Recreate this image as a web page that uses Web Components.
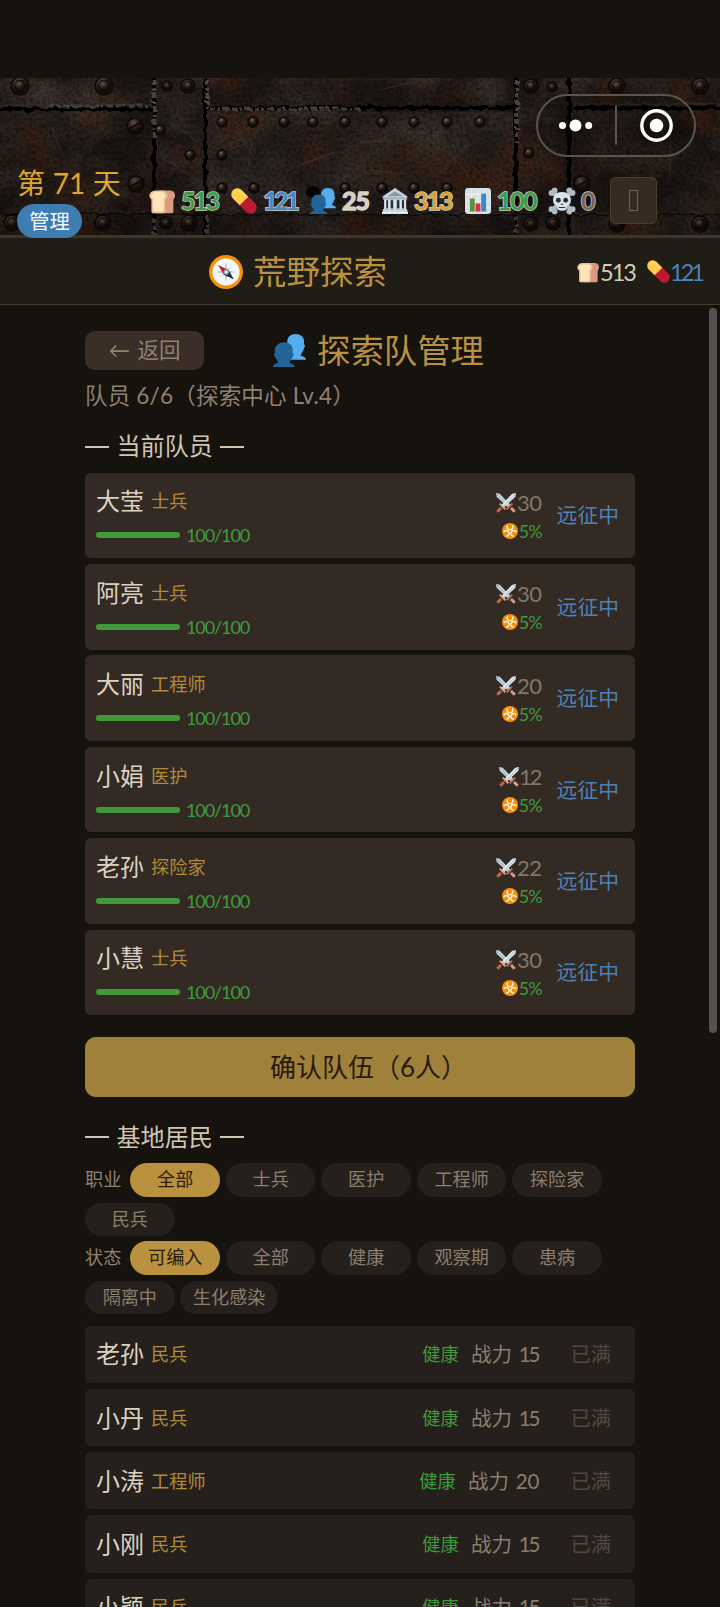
<!DOCTYPE html>
<html lang="zh-CN">
<head>
<meta charset="utf-8">
<title>荒野探索</title>
<style>
html,body{margin:0;background:#16120d}
body{width:720px;height:1607px;overflow:hidden;font-family:Lato,"Noto Sans CJK SC",sans-serif;font-weight:400;color:#d5c9b7}
</style>
</head>
<body>
<explore-app></explore-app>
<script>
const ICONS={
bread:'<path d="M12 3h14c6 0 8 7 4 11v15q0 2-2 2H8q-3 0-3-2z" fill="#d99a7f"/><path d="M8 3h8c7 0 9 8 4 11v15q0 2-2 2H5q-2 0-2-2V14C-2 10 1 3 8 3z" fill="#eec09a"/><path d="M8 5h7c5 0 7 6 3 8v14q0 2-2 2H7q-2 0-2-2V13C1 11 3 5 8 5z" fill="#ffe5ba"/>',
pill:'<g transform="rotate(45 16 16)"><rect x="-3" y="8.500" width="38" height="15" rx="7.500" fill="#be1933"/><path d="M16 8.500H4.500a7.500 7.500 0 0 0 0 15H16z" fill="#ffce4b"/><path d="M1 15q0-4 5-4h8" stroke="#ffe28d" stroke-width="1.500" fill="none" opacity=".7"/></g>',
people:'<path d="M22 0c6 0 9 4 8 10q2 1 0 4c-1 4-3 5-3 7q5 1 5 4H15v-5l-1-6q-2-2 0-4C13 4 16 0 22 0z" fill="#55acee"/><path d="M11 8c6 0 9 4 8 10q2 1 0 4c-1 3-3 4-3 6q5 1 5 4H0q0-3 5-4c0-2-2-3-3-6q-2-3 0-4C1 12 5 8 11 8z" fill="#226699"/>',
bank:'<path d="M16 1L31 11v3H1v-3zM3 14h26v12H3z" fill="#a9b8c4"/><path d="M16 0L32 11H0z" fill="#ccd6dd"/><path d="M16 4l10 6H6z" fill="#8899a6"/><path d="M6 15v10M12 15v10M20 15v10M26 15v10" stroke="#292f33" stroke-width="3"/><path d="M4 14v12M9 14v12M16 14v12M23 14v12M28.500 14v12" stroke="#e1e8ed" stroke-width="2.500"/><path d="M1 26h30v5H1z" fill="#ccd6dd"/><path d="M0 29h32v3H0z" fill="#e1e8ed"/>',
chart:'<rect width="32" height="32" rx="4" fill="#d7e0e6"/><path d="M1 8h30M1 16h30M1 24h30M8 1v30M16 1v30M24 1v30" stroke="#edf4f7"/><path d="M6 13h6v16H6z" fill="#5c913b"/><path d="M13 19h6v10h-6z" fill="#dd2e44"/><path d="M20 7h6v22h-6z" fill="#3b88c3"/>',
skull:'<path d="M4 5l24 22M28 5L4 27" stroke="#a7b9c6" stroke-width="5"/><g fill="#adbdca"><circle cx="3" cy="6" r="3.500"/><circle cx="7" cy="3" r="3.500"/><circle cx="25" cy="3" r="3.500"/><circle cx="29" cy="6" r="3.500"/><circle cx="3" cy="26" r="3.500"/><circle cx="7" cy="29" r="3.500"/><circle cx="25" cy="29" r="3.500"/><circle cx="29" cy="26" r="3.500"/></g><path d="M16 5c7 0 11 4 11 10 0 4-2 6-5 7v4q-6 4-12 0v-4c-3-1-5-3-5-7C5 9 9 5 16 5z" fill="#d9e3e9"/><circle cx="11.500" cy="15" r="3" fill="#292f33"/><circle cx="20.500" cy="15" r="3" fill="#292f33"/><path d="M14.500 20h3M12 24h8" stroke="#292f33" stroke-width="1.500"/>',
compass:'<circle cx="16" cy="16" r="16" fill="#f4900c"/><circle cx="16" cy="16" r="12.800" fill="#f5f8fa"/><path d="M16 6l1.500 8.500L26 16l-8.500 1.500L16 26l-1.500-8.500L6 16l8.500-1.500z" fill="#b6ccd8"/><path d="M10 10l5 4 7 8-8-5zM22 10l-4 5-8 7 5-8z" fill="#d0dde4"/><path d="M8.500 9.500l10 4.500-4.500 4.500z" fill="#be1931"/><path d="M23.500 23l-9.500-4.500 4.500-4.500z" fill="#292f33"/><circle cx="16.200" cy="16" r="2.500" fill="#9aabb7"/><circle cx="16.200" cy="16" r="1.100" fill="#fff"/>',
swords:'<path d="M0 0l6 1 18 19-4 4L1 6z" fill="#c3d4df"/><path d="M1 1l20 22" stroke="#8ba0b0" stroke-width="1.300"/><path d="M17 26l9-9" stroke="#bf6952" stroke-width="3"/><path d="M24 24l6 6" stroke="#d99e82" stroke-width="4.500"/><g transform="matrix(-1 0 0 1 32 0)"><path d="M0 0l6 1 18 19-4 4L1 6z" fill="#dce8ef"/><path d="M1 1l20 22" stroke="#9cb0bd" stroke-width="1.300"/><path d="M17 26l9-9" stroke="#e3a27c" stroke-width="3"/><path d="M24 24l6 6" stroke="#bf6952" stroke-width="4.500"/></g>',
bio:'<circle cx="16" cy="16" r="16" fill="#f4900c"/><g fill="none" stroke="#fff1dc" stroke-width="3"><path d="M11.500 5a5.500 5.500 0 1 0 9 0"/><path d="M11.500 5a5.500 5.500 0 1 0 9 0" transform="rotate(120 16 16.500)"/><path d="M11.500 5a5.500 5.500 0 1 0 9 0" transform="rotate(240 16 16.500)"/></g><circle cx="16" cy="16.500" r="2" fill="#f4900c"/>',
};
function define(name,html,after){
  const t=document.createElement('template');t.innerHTML=html;
  customElements.define(name,class extends HTMLElement{
    connectedCallback(){
      if(this.shadowRoot)return;
      this.attachShadow({mode:'open'}).append(t.content.cloneNode(true));
      if(after)after(this,this.shadowRoot);
    }
  });
}

define('ui-icon','<style>:host{display:block;flex:none}svg{display:block;overflow:visible}</style><svg viewBox="0 0 32 32"></svg>',(el,r)=>{
  const s=r.querySelector('svg'),n=el.getAttribute('size')||26;
  s.setAttribute('width',n);s.setAttribute('height',n);s.innerHTML=ICONS[el.getAttribute('name')];
});

/* Riveted rusty plates behind the status bar */
define('metal-plates',`<style>:host{display:block}svg{display:block}</style>
<svg width="720" height="157" viewBox="0 0 720 157">
<defs>
<filter id="grain" x="0" y="0" width="100%" height="100%" color-interpolation-filters="sRGB"><feTurbulence type="fractalNoise" baseFrequency=".018 .022" numOctaves="6" seed="8"/><feColorMatrix values="0 0 0 0 .29  0 0 0 0 .25  0 0 0 0 .22  2.2 0 0 0 -.75"/></filter>
<filter id="rust" x="0" y="0" width="100%" height="100%" color-interpolation-filters="sRGB"><feTurbulence type="fractalNoise" baseFrequency=".02 .016" numOctaves="6" seed="31"/><feColorMatrix values="0 0 0 0 .28  0 0 0 0 .145  0 0 0 0 .08  0 3 0 0 -1.4"/></filter>
<filter id="fine" x="0" y="0" width="100%" height="100%" color-interpolation-filters="sRGB"><feTurbulence type="fractalNoise" baseFrequency=".3" numOctaves="2" seed="4"/><feColorMatrix values="0 0 0 0 0  0 0 0 0 0  0 0 0 0 0  0 0 1 0 -.38"/></filter>
<filter id="rough" x="-5%" y="-20%" width="110%" height="140%"><feTurbulence type="fractalNoise" baseFrequency=".12" numOctaves="2" seed="2"/><feDisplacementMap in="SourceGraphic" scale="6"/></filter>
<radialGradient id="bolt" cx=".4" cy=".3"><stop offset="0" stop-color="#64524a"/><stop offset=".5" stop-color="#3a2a22"/><stop offset="1" stop-color="#150e0a"/></radialGradient>
<linearGradient id="shade" x2="0" y2="1"><stop offset="0" stop-color="#000" stop-opacity="0"/><stop offset="1" stop-color="#000" stop-opacity=".25"/></linearGradient>
</defs>
<rect width="720" height="157" fill="#1d1714"/>
<rect x="206" y="34" width="308" height="100" fill="#28211e"/>
<rect width="720" height="157" filter="url(#grain)" opacity=".75"/>
<rect width="720" height="157" filter="url(#rust)" opacity=".75"/>
<rect width="720" height="157" filter="url(#fine)"/>
<g filter="url(#rough)" fill="none">
<path d="M0 31H152M206 30H514M568 30H720" stroke="#050403" stroke-width="4"/><path d="M0 27H152M568 26H720" stroke="#3b302a" stroke-width="1"/>
<path d="M154 0V157M205 0V157M516 0V157M569 0V157" stroke="#060403" stroke-width="4"/><path d="M157 0V157M208 0V157M519 0V157M572 0V157" stroke="#332a25" stroke-width="1"/>
<path d="M50 28H150M210 31H360" stroke="#46403b" stroke-width="3" stroke-dasharray="5 2 3 3 7 2"/><path d="M154 2V60M207 2V30M517 2V66M154 140V157M207 138V157M516 138V157" stroke="#4b443e" stroke-width="4" stroke-dasharray="5 3 3 2"/>
<path d="M75 135H152" stroke="#332c28" stroke-width="3" stroke-dasharray="4 2 6 3"/>
<path d="M0 136H720" stroke="#0a0806" stroke-width="2"/><path d="M210 135H720" stroke="#3f3630" stroke-width="1"/>
</g>
<g stroke="#5b5048" stroke-width=".8" opacity=".5" fill="none"><path d="M50 46l13 32M158 76l42 28M170 44l28 20M284 94l50-20M300 86l38-12M440 66l27 28M468 66l-28 28M370 92l35 4M360 64l32-1M246 100l6-36M670 60v42M462 20l10-16M380 12l32-8M236 52l20 30"/></g>
<g class="bolts" stroke="#0d0806" stroke-width="1.500" fill="url(#bolt)"></g>
<ellipse cx="313" cy="114" rx="7" ry="6" fill="#080504"/>
<rect width="720" height="157" fill="url(#shade)"/>
</svg>`,(el,r)=>{
  const big=[[20,8,9],[104,8,9],[188,8,7],[531,8,7],[617,8,8],[700,8,8],[103,145,8],[189,145,8],[166,145,6],[531,146,7],[553,145,7],[617,146,8],[700,146,8],[167,8,5],[552,9,5],[12,145,8]];
  const slot=[[135,48],[136,106],[582,106]];
  const small=[[222,44],[253,44],[284,44],[313,44],[345,44],[382,44],[414,44],[447,44],[480,44],[190,77],[222,77],[529,75],[222,110],[254,110],[345,110],[382,110],[414,110],[447,110],[160,52]];
  r.querySelector('.bolts').innerHTML=
   big.map(([x,y,d])=>`<circle cx="${x}" cy="${y}" r="${d}"/><path d="M${x-d*.65} ${y}l${d*.3}-${d*.6}h${d*.7}l${d*.3} ${d*.6}-${d*.3} ${d*.6}h-${d*.7}z" stroke-width=".8"/>`).join('')+
   slot.map(([x,y])=>`<circle cx="${x}" cy="${y}" r="8"/><path d="M${x-6} ${y+3}l12-7"/>`).join('')+
   small.map(([x,y])=>`<circle cx="${x}" cy="${y}" r="5"/><circle cx="${x-1}" cy="${y-2}" r="1" fill="#7f7067" stroke="none"/>`).join('');
});

define('stat-item',`<style>:host{display:flex;align-items:center;gap:6px;height:34px;font-size:25px;line-height:34px}
b{font-weight:700;-webkit-text-stroke:1.500px #d0cfc0;paint-order:stroke fill;position:relative;top:-1px}</style><ui-icon></ui-icon><b><slot></slot></b>`,(el,r)=>{
  const b=r.querySelector('b');b.style.color=el.getAttribute('tone');b.style.letterSpacing=(el.getAttribute('track')||-1)+'px';
  const i=document.createElement('ui-icon');i.setAttribute('name',el.getAttribute('icon'));i.setAttribute('size',26);
  r.querySelector('ui-icon').replaceWith(i);
});

define('mini-capsule',`<style>:host{position:absolute;left:536px;top:94px;display:block;z-index:2}svg{display:block}</style>
<svg width="160" height="63" viewBox="0 0 160 63"><rect x="1" y="1" width="158" height="61" rx="30.500" fill="#000" fill-opacity=".18" stroke="#5c534d" stroke-width="2"/><path d="M80 11.500v39" stroke="#5c544f" stroke-width="2"/><g fill="#fff"><circle cx="26.500" cy="31.500" r="3.500"/><circle cx="39.500" cy="31.500" r="6"/><circle cx="52.700" cy="31.500" r="3.500"/><circle cx="120.500" cy="31.500" r="6.800"/></g><circle cx="120.500" cy="31.500" r="14.700" fill="none" stroke="#fff" stroke-width="3.400"/></svg>`);

define('status-header',`<style>
:host{display:block;position:relative;padding-top:78px;height:157px;border-bottom:3px solid #40332a}
.stage{display:grid}.stage>*{grid-area:1/1}
.row{display:flex;height:157px;align-items:flex-start;position:relative;z-index:1}
.day{width:131px;padding:86px 0 0 17px;box-sizing:border-box;font-size:28px;line-height:38px;color:#dda62c;white-space:nowrap;word-spacing:.5px}
.tag{display:block;margin-top:2px;width:65px;height:34px;border-radius:17px;background:#3f7cb1;color:#f3f5f6;font-size:20.300px;line-height:34px;text-align:center}
.stats{display:grid;grid-template-columns:82px 79px 72px 83px 84px 61px;margin:106px 0 0 18px}
.menu{margin-top:99px;width:45px;height:45px;border:1px solid #4a3c2d;border-radius:5px;background:#372a20;display:grid;place-items:center}
.menu i{width:7px;height:19px;border:1px solid #706354}
</style>
<div class="stage"><metal-plates></metal-plates><div class="row">
<div class="day">第 71 天<span class="tag">管理</span></div>
<div class="stats"><stat-item icon="bread" tone="#3d9c48" track="-2.200">513</stat-item><stat-item icon="pill" tone="#4a86c4" track="-3.400">121</stat-item><stat-item icon="people" tone="#d9d0c5" track="-1">25</stat-item><stat-item icon="bank" tone="#dba033" track="-2">313</stat-item><stat-item icon="chart" tone="#3d9c48" track="-1.500">100</stat-item><stat-item icon="skull" tone="#776258">0</stat-item></div>
<div class="menu"><i></i></div></div></div><mini-capsule></mini-capsule>`);

define('title-bar',`<style>
:host{display:grid;grid-template-columns:1fr auto auto;align-items:center;height:66px;padding:1px 17px 0 209px;box-sizing:border-box;height:67px;background:#201c16;border-bottom:1px solid #443a2d;box-shadow:0 1px #28221a}
.t{display:flex;align-items:center;gap:10px;font-size:33.500px;color:#b99140;line-height:48px}
.t span{position:relative;top:-1px}
.n{display:flex;align-items:center;font-size:23.500px;line-height:30px;margin-left:11px;gap:1px;letter-spacing:-1.900px}
.b{color:#4b86bb;gap:0;letter-spacing:-3px;margin-left:12px}
.b span{margin-right:1px}
</style><div class="t"><ui-icon name="compass" size="34"></ui-icon><span>荒野探索</span></div><div class="n"><ui-icon name="bread" size="22"></ui-icon><span>513</span></div><div class="n b"><ui-icon name="pill" size="23"></ui-icon><span>121</span></div>`);

define('team-head',`<style>
:host{display:block}
.r{display:flex;align-items:center;height:40px}
.back{width:119px;height:39px;border-radius:10px;background:#3a2e26;color:#8f8171;font-size:21.500px;line-height:39px;text-align:center;word-spacing:2px}
.t{display:flex;align-items:center;gap:11px;margin-left:69px;color:#b99140;font-size:33.400px;line-height:46px}
.s{font-size:22.500px;line-height:38px;height:34px;color:#8f8272;margin-top:7px;letter-spacing:.2px;white-space:nowrap}
</style><div class="r"><div class="back">← 返回</div><div class="t"><ui-icon name="people" size="33"></ui-icon><span>探索队管理</span></div></div><div class="s">队员 6/6（探索中心 Lv.4）</div>`);

define('section-title',`<style>:host{display:flex;align-items:center;gap:7.500px;height:32px;font-size:24.100px;line-height:32px;color:#d0c5b4}i{width:24px;height:2px;background:currentColor;position:relative;top:.5px}</style><i></i><span><slot></slot></span><i></i>`);

define('member-card',`<style>
:host{display:flex;align-items:center;height:85.500px;box-sizing:border-box;padding:0 16px 0 11px;border-radius:6px;background:#342a24}
.l{flex:1;padding-top:2px}.name{display:flex;align-items:center;gap:7px;font-size:24px;line-height:30px;height:30px;color:#ddd2c2}
.name small{font-size:18.200px;color:#b18b3c}
.hp{display:flex;align-items:center;gap:6px;height:22px;margin-top:8px;font-size:18px;line-height:22px;color:#3f9a3c;letter-spacing:-1.100px}
.hp i{width:84px;height:6px;border-radius:3px;background:#419a3a}
.m{display:flex;flex-direction:column;align-items:flex-end;margin-right:15px;padding-top:3px}
.m div{display:flex;align-items:center;height:28px;line-height:28px;gap:1px;font-size:22px;color:#85776a;letter-spacing:-.5px}
.m .one{letter-spacing:-2.300px;margin-right:1.500px;margin-left:-3px}
.m .one{margin-left:-1px}
.m .i{font-size:18px;color:#3f9a3c;letter-spacing:-1px}
.w{font-size:20.800px;color:#4b82b3;position:relative;top:-1px}
</style><div class="l"><div class="name"><span></span><small></small></div><div class="hp"><i></i><span>100/100</span></div></div><div class="m"><div><ui-icon name="swords" size="20"></ui-icon><span class="p"></span></div><div class="i"><ui-icon name="bio" size="16"></ui-icon><span>5%</span></div></div><div class="w">远征中</div>`,(el,r)=>{
  r.querySelector('.name span').textContent=el.getAttribute('name');
  r.querySelector('small').textContent=el.getAttribute('job');
  const p=r.querySelector('.p');p.textContent=el.getAttribute('power');
  p.classList.toggle('one',p.textContent[0]==='1');
});

define('gold-button',`<style>:host{display:block;height:59.500px;box-sizing:border-box;padding-left:17px;border-radius:11px;background:#a0813b;color:#2b1a0b;font-size:26px;line-height:60px;text-align:center;white-space:nowrap}</style><slot></slot>`);

define('filter-chip',`<style>:host{display:block;box-sizing:border-box;min-width:89.600px;height:33.500px;padding:0 12.500px;border-radius:17px;background:#25201b;color:#8b7e6f;font-size:18.100px;line-height:33.500px;text-align:center;white-space:nowrap}:host([on]){background:#b9913f;color:#2c1c0c}</style><slot></slot>`);

define('filter-group',`<style>:host{display:flex;flex-wrap:wrap;gap:5.900px}.k{width:39.500px;font-size:18.200px;line-height:33.500px;color:#8f8272}</style><span class="k"></span><slot></slot>`,(el,r)=>{r.querySelector('.k').textContent=el.getAttribute('label')});

define('resident-row',`<style>
:host{display:flex;align-items:center;height:57.200px;box-sizing:border-box;padding:0 24px 0 11px;border-radius:6px;background:#25201b;line-height:30px;white-space:nowrap}
.n{font-size:24px;color:#ddd2c2}.j{font-size:18.200px;color:#b18b3c;margin-left:7px;flex:1}
.h{font-size:18.300px;color:#3f9a3c}.p{font-size:20.500px;color:#8a7d6e;margin-left:12px;word-spacing:1.500px}
.p.one b{letter-spacing:-2px;margin-right:1px}b{font-weight:400}
.f{font-size:20.300px;color:#51483f;margin-left:31px}
</style><span class="n"></span><span class="j"></span><span class="h">健康</span><span class="p">战力 <b></b></span><span class="f">已满</span>`,(el,r)=>{
  r.querySelector('.n').textContent=el.getAttribute('name');
  r.querySelector('.j').textContent=el.getAttribute('job');
  const v=el.getAttribute('power');
  r.querySelector('b').textContent=v;
  r.querySelector('.p').classList.toggle('one',v[0]==='1');
});

define('explore-app',`<style>
:host{display:block;position:relative;width:720px;height:1607px;overflow:hidden}
main{padding:25.200px 85px 0;background:#16120d;width:550px}
team-head{margin-bottom:19.300px}
.cards,.list{display:flex;flex-direction:column;gap:5.900px}
.list{gap:6px}
.cards{margin-top:10.200px}
gold-button{margin:22.300px 0 24px}
filter-group{margin-bottom:5.200px}
.filters{margin-top:10.300px;margin-bottom:11.700px}
.bar{position:absolute;left:709px;top:308px;width:8px;height:725px;border-radius:4px;background:#565150}
</style>
<status-header></status-header><title-bar></title-bar>
<main><team-head></team-head>
<section-title>当前队员</section-title>
<div class="cards">
<member-card name="大莹" job="士兵" power="30"></member-card>
<member-card name="阿亮" job="士兵" power="30"></member-card>
<member-card name="大丽" job="工程师" power="20"></member-card>
<member-card name="小娟" job="医护" power="12"></member-card>
<member-card name="老孙" job="探险家" power="22"></member-card>
<member-card name="小慧" job="士兵" power="30"></member-card>
</div>
<gold-button>确认队伍（6人）</gold-button>
<section-title>基地居民</section-title>
<div class="filters">
<filter-group label="职业"><filter-chip on>全部</filter-chip><filter-chip>士兵</filter-chip><filter-chip>医护</filter-chip><filter-chip>工程师</filter-chip><filter-chip>探险家</filter-chip><filter-chip>民兵</filter-chip></filter-group>
<filter-group label="状态"><filter-chip on>可编入</filter-chip><filter-chip>全部</filter-chip><filter-chip>健康</filter-chip><filter-chip>观察期</filter-chip><filter-chip>患病</filter-chip><filter-chip>隔离中</filter-chip><filter-chip>生化感染</filter-chip></filter-group>
</div>
<div class="list">
<resident-row name="老孙" job="民兵" power="15"></resident-row>
<resident-row name="小丹" job="民兵" power="15"></resident-row>
<resident-row name="小涛" job="工程师" power="20"></resident-row>
<resident-row name="小刚" job="民兵" power="15"></resident-row>
<resident-row name="小颖" job="民兵" power="15"></resident-row>
</div></main><div class="bar"></div>`);
</script>
</body>
</html>
